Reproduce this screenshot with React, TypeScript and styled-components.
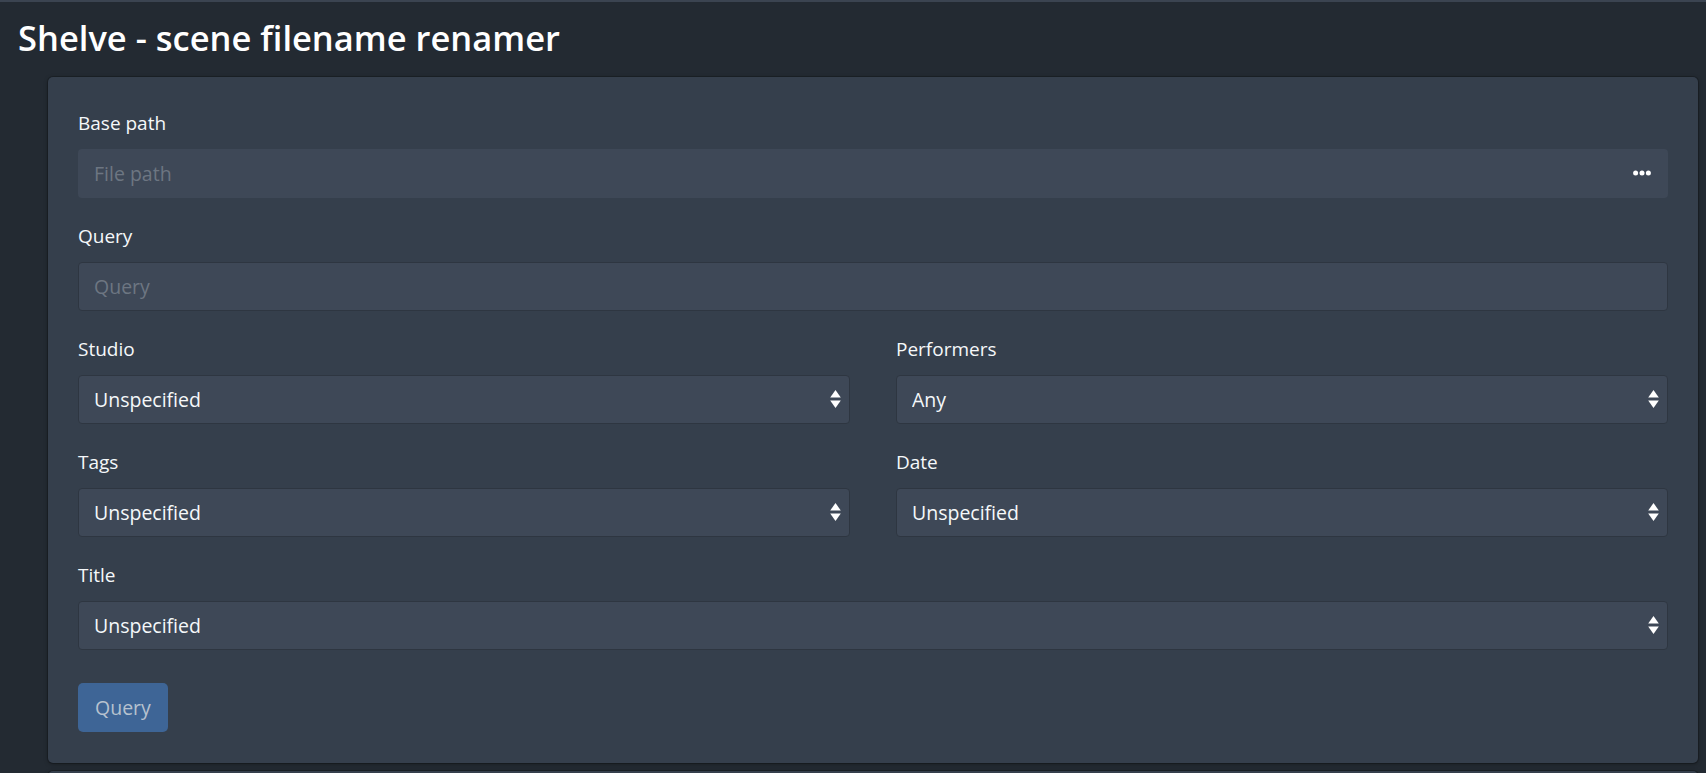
import React from "react";
import styled, { createGlobalStyle } from "styled-components";

const GlobalStyle = createGlobalStyle`
  html, body {
    margin: 0;
    padding: 0;
    background: #232a32;
    font-family: "Open Sans", "Noto Sans", sans-serif;
    color: #f5f8fa;
  }
  * { box-sizing: border-box; }
`;

const Page = styled.div`
  height: 100vh;
  overflow: hidden;
  border-top: 2px solid #3b4451;
  background: #232a32;
`;

const Title = styled.h3`
  margin: 15px 0 18px 18px;
  font-size: 34.5px;
  line-height: 42px;
  font-weight: 600;
  color: #ffffff;
`;

const Card = styled.section`
  margin: 0 8px 8px 48px;
  padding: 31px 30px 31px 30px;
  background: #353f4c;
  border-radius: 5px;
  box-shadow: 0 0 0 1px rgba(0, 0, 0, 0.18), 0 1px 4px rgba(0, 0, 0, 0.35);
`;

const Group = styled.div`
  margin-bottom: 23.5px;
`;

const Label = styled.label`
  display: block;
  font-size: 19px;
  line-height: 30px;
  margin-bottom: 11px;
  color: #f5f8fa;
`;

const Row = styled.div`
  display: grid;
  grid-template-columns: 1fr 1fr;
  column-gap: 46px;
`;

const InputGroup = styled.div`
  display: flex;
  align-items: center;
  height: 48.5px;
  background: #3e4857;
  border-radius: 4px;
`;

const BareInput = styled.input`
  flex: 1;
  height: 100%;
  padding: 0 16px;
  border: none;
  background: transparent;
  color: #f5f8fa;
  font: inherit;
  font-size: 19.5px;
  outline: none;
  &::placeholder { color: #6d7682; }
`;

const DotsButton = styled.button`
  display: flex;
  align-items: center;
  justify-content: center;
  height: 100%;
  padding: 0 17px 0 12px;
  border: none;
  background: transparent;
  color: #ffffff;
  cursor: pointer;
`;

const TextInput = styled.input`
  display: block;
  width: 100%;
  height: 48.5px;
  padding: 0 15px;
  border: 1px solid #2e3641;
  border-radius: 4px;
  background: #3e4857;
  color: #f5f8fa;
  font: inherit;
  font-size: 19.5px;
  outline: none;
  &::placeholder { color: #6d7682; }
`;

const SelectWrap = styled.div`
  position: relative;
  height: 48.5px;
`;

const Select = styled.select`
  appearance: none;
  -webkit-appearance: none;
  display: block;
  width: 100%;
  height: 100%;
  padding: 0 36px 0 15px;
  border: 1px solid #2e3641;
  border-radius: 4px;
  background: #3e4857;
  color: #f5f8fa;
  font: inherit;
  font-size: 19.5px;
  outline: none;
`;

const SortIcon = styled.svg`
  position: absolute;
  right: 9px;
  top: 50%;
  transform: translateY(-50%);
  pointer-events: none;
`;

const Actions = styled.div`
  padding-top: 9.5px;
`;

const PrimaryButton = styled.button<{ $disabled?: boolean }>`
  height: 49px;
  padding: 0 17px;
  border: none;
  border-radius: 5px;
  background: #3e6596;
  color: ${(p) => (p.$disabled ? "#b7c2cf" : "#ffffff")};
  font: inherit;
  font-size: 19.5px;
`;

const Dots = () => (
  <svg width="18" height="6" viewBox="0 0 18 6" fill="#ffffff">
    <circle cx="2.6" cy="3" r="2.5" />
    <circle cx="9" cy="3" r="2.5" />
    <circle cx="15.4" cy="3" r="2.5" />
  </svg>
);

const Sort = () => (
  <SortIcon width="11" height="19" viewBox="0 0 11 19" fill="#ffffff">
    <path d="M5.5 0.5 L10.8 8 L0.2 8 Z" />
    <path d="M0.2 11 L10.8 11 L5.5 18.5 Z" />
  </SortIcon>
);

type SelectFieldProps = { label: string; value: string };

const SelectField = ({ label, value }: SelectFieldProps) => (
  <Group>
    <Label>{label}</Label>
    <SelectWrap>
      <Select defaultValue={value}>
        <option>{value}</option>
      </Select>
      <Sort />
    </SelectWrap>
  </Group>
);

export default function App() {
  return (
    <>
      <GlobalStyle />
      <Page>
        <Title>Shelve - scene filename renamer</Title>
        <Card>
          <Group>
            <Label>Base path</Label>
            <InputGroup>
              <BareInput placeholder="File path" />
              <DotsButton aria-label="Browse">
                <Dots />
              </DotsButton>
            </InputGroup>
          </Group>
          <Group>
            <Label>Query</Label>
            <TextInput placeholder="Query" />
          </Group>
          <Row>
            <SelectField label="Studio" value="Unspecified" />
            <SelectField label="Performers" value="Any" />
          </Row>
          <Row>
            <SelectField label="Tags" value="Unspecified" />
            <SelectField label="Date" value="Unspecified" />
          </Row>
          <SelectField label="Title" value="Unspecified" />
          <Actions>
            <PrimaryButton $disabled>Query</PrimaryButton>
          </Actions>
        </Card>
        <Card />
      </Page>
    </>
  );
}
